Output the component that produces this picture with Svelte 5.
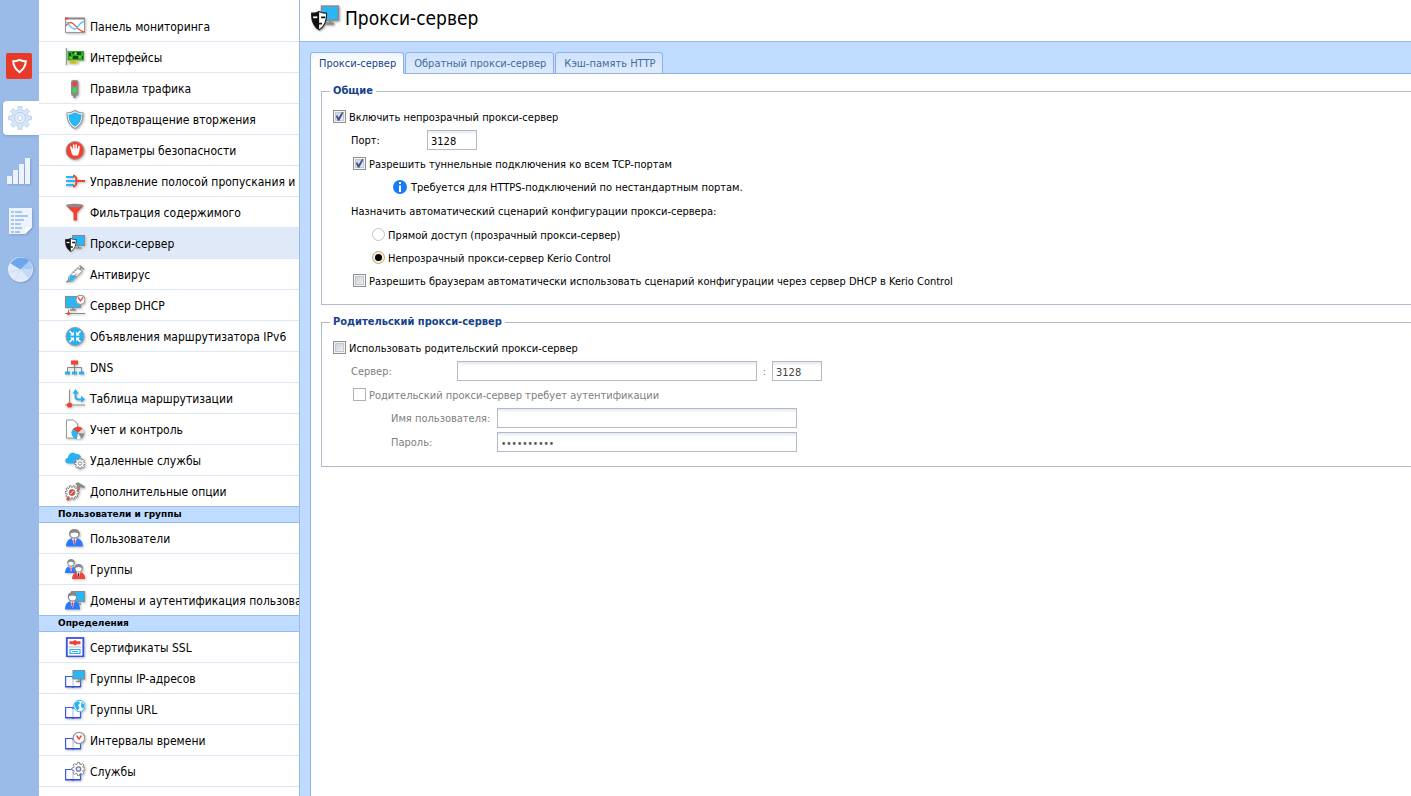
<script lang="ts">
  type Item = { icon: string; label: string };
  type Group = { title?: string; items: Item[] };

  const groups: Group[] = [
    {
      items: [
        { icon: 'dashboard', label: 'Панель мониторинга' },
        { icon: 'interfaces', label: 'Интерфейсы' },
        { icon: 'traffic', label: 'Правила трафика' },
        { icon: 'shield', label: 'Предотвращение вторжения' },
        { icon: 'hand', label: 'Параметры безопасности' },
        { icon: 'bandwidth', label: 'Управление полосой пропускания и' },
        { icon: 'filter', label: 'Фильтрация содержимого' },
        { icon: 'proxy', label: 'Прокси-сервер' },
        { icon: 'antivirus', label: 'Антивирус' },
        { icon: 'dhcp', label: 'Сервер DHCP' },
        { icon: 'router', label: 'Объявления маршрутизатора IPv6' },
        { icon: 'dns', label: 'DNS' },
        { icon: 'routing', label: 'Таблица маршрутизации' },
        { icon: 'accounting', label: 'Учет и контроль' },
        { icon: 'cloud', label: 'Удаленные службы' },
        { icon: 'advanced', label: 'Дополнительные опции' }
      ]
    },
    {
      title: 'Пользователи и группы',
      items: [
        { icon: 'user', label: 'Пользователи' },
        { icon: 'users', label: 'Группы' },
        { icon: 'domains', label: 'Домены и аутентификация пользова' }
      ]
    },
    {
      title: 'Определения',
      items: [
        { icon: 'ssl', label: 'Сертификаты SSL' },
        { icon: 'ipgroups', label: 'Группы IP-адресов' },
        { icon: 'urlgroups', label: 'Группы URL' },
        { icon: 'time', label: 'Интервалы времени' },
        { icon: 'services', label: 'Службы' }
      ]
    }
  ];

  const rail = ['kerio', 'settings', 'stats', 'logs', 'pie'];
  const tabs = ['Прокси-сервер', 'Обратный прокси-сервер', 'Кэш-память HTTP'];

  let activeItem = $state('proxy');
  let activeRail = $state('settings');
  let activeTab = $state(0);

  let proxyEnabled = $state(true);
  let port = $state('3128');
  let allowTunnel = $state(true);
  let script = $state('proxy');
  let dhcpScript = $state(false);

  let parentEnabled = $state(false);
  let parentServer = $state('');
  let parentPort = $state('3128');
  let parentAuth = $state(false);
  let userName = $state('');
  let password = $state('xxxxxxxxxx');

  function gear(cx: number, cy: number, outer: number, inner: number, teeth = 8) {
    const points: string[] = [];
    const step = (Math.PI * 2) / teeth;
    for (let i = 0; i < teeth; i++) {
      const a = i * step;
      for (const [offset, r] of [[-0.3, inner], [-0.2, outer], [0.2, outer], [0.3, inner]]) {
        const t = a + offset * step;
        points.push(`${(cx + Math.cos(t) * r).toFixed(2)} ${(cy + Math.sin(t) * r).toFixed(2)}`);
      }
    }
    return `M${points.join('L')}Z`;
  }
</script>

{#snippet monitor(x: number, y: number, w: number, h: number)}
  <rect {x} {y} width={w} height={h} fill="#29b6f6" stroke="#8a8a8a" />
  <path d="M{x + w / 2} {y + h}v2.5M{x + w / 2 - 3} {y + h + 2.5}h6" stroke="#8a8a8a" stroke-width="1.5" />
{/snippet}

{#snippet book()}
  <path d="M.6 8.5h6.4l1 1 1-1h6.5v10H9l-1 .8-1-.8H.6z" fill="#fff" stroke="#3d5af0" stroke-width="1.2" />
  <path d="M8 9.500v8" stroke="#a9b8f5" />
  <path d="M.4 18.700h15.400" stroke="#3549dd" stroke-width="1.500" />
{/snippet}

{#snippet person(x: number, y: number, coat: string)}
  <g transform="translate({x} {y})">
    <path d="M0 14c0-4 1.800-6.200 4.500-6.800h3C10.200 7.800 12 10 12 14z" fill={coat} />
    <path d="M4.200 7.300 6 13l1.800-5.700z" fill="#fff" />
    <path d="m6 8 .8 1-.8 4-.8-4z" fill={coat === '#f44336' ? '#333' : '#f44336'} />
    <circle cx="6" cy="4" r="3.300" fill="#fff" stroke="#888" />
    <path d="M2.500 4C2 1.500 3.700.2 6 .2S10 1.500 9.500 4C8.500 2.800 7.500 3.200 6 2.700 4.500 3.200 3.500 2.800 2.500 4z" fill="#888" />
  </g>
{/snippet}

{#snippet clock(cx: number, cy: number, r: number)}
  <circle {cx} {cy} {r} fill="#fff" stroke="#999" stroke-width="1.200" />
  <path d="M{cx - 2.5} {cy - 2.5} {cx} {cy + 1}l2.500-3.500" fill="none" stroke="#f44336" stroke-width="1.400" />
{/snippet}

{#snippet mask()}
  <path d="M.5 6.500c2 .2 3.700-.2 5.300-1.200 1.600 1 3.300 1.400 5.300 1.200.3 5.500-1.300 9.500-5.300 12-4-2.500-5.600-6.500-5.300-12z" fill="#fff" stroke="#222" stroke-width=".8" />
  <path d="M.5 6.500c2 .2 3.700-.2 5.300-1.200v13.200C1.800 16 .2 12 .5 6.500z" fill="#111" />
  <path d="M1.500 9.500h3" stroke="#fff" stroke-width="1.300" />
  <path d="M7.200 9.500h3M5.800 14h2" stroke="#111" stroke-width="1.300" />
{/snippet}

{#snippet icon(name: string)}
  <svg class="icon" viewBox="0 0 20 20" fill="none" aria-hidden="true">
    {#if name === 'dashboard'}
      <path d="M.5 3v13.500h19V3" fill="#fff" stroke="#999" />
      <path d="M0 2.500h20" stroke="#888" stroke-width="2" />
      <path d="M0 2.500h3" stroke="#f44336" stroke-width="2" />
      <path d="M1 10c1.500-3 4-4.500 7-2.500S13.500 15 19 16" stroke="#f44336" stroke-width="1.300" />
      <path d="M1 6c3 1 4.500 7 8.500 7C13 13 14 6 19 5.500" stroke="#4fc3f7" stroke-width="1.300" />
    {:else if name === 'interfaces'}
      <path d="M.5 2h1v16" stroke="#999" stroke-width="1.300" />
      <path d="M2.500 4h16.500v9.500H2.500z" fill="#31a829" />
      <path d="M4 13.500h9v3H4z" fill="#e5cf31" />
      <path d="M6 13.500v3M8 13.500v3M10 13.500v3" stroke="#8a961c" stroke-width=".6" />
      <path d="M4 6h2v3H4zM8 9h5v3H8zM12 5h4v3h-4zM17 9h1v3h-1zM7.500 5h2v2h-2z" fill="#104b19" />
      <path d="M10 6h1v1h-1zM5 11h2M14 10h2" stroke="#c8e84a" />
    {:else if name === 'traffic'}
      <path d="M8.300 17.500h2.500V20H8.300z" fill="#888" />
      <rect x="6" y="2" width="7.500" height="16" rx="2.500" fill="#8c8c8c" />
      <circle cx="9.700" cy="6" r="2.400" fill="#f4412f" />
      <circle cx="9.700" cy="12.500" r="2.400" fill="#31e23a" />
    {:else if name === 'shield'}
      <path d="M10 1.500c2.500 1.800 5 2.500 8 2.500.3 7-2 12.500-8 15.500C4 16.500 1.700 11 2 4c3 0 5.500-.7 8-2.500z" fill="#fff" stroke="#999" stroke-width="1.200" />
      <path d="M10 3.300c2.200 1.300 4.300 2 6.600 2.100 0 5.600-2 9.800-6.600 12.300-4.600-2.500-6.600-6.700-6.600-12.300C5.700 5.300 7.800 4.600 10 3.300z" fill="#29b6f6" />
    {:else if name === 'hand'}
      <circle cx="10" cy="10.500" r="9" fill="#f4412f" stroke="#999" />
      <path d="M6.500 9.500 5.800 7M8.700 9V5M11.200 9V5M13.500 9.500l.5-3" stroke="#fff" stroke-width="1.600" stroke-linecap="round" />
      <path d="M5.700 8.500h8.700c.2 2.700-.4 5-1.700 7H8c-1-1.500-2-3-2.300-7z" fill="#fff" />
    {:else if name === 'bandwidth'}
      <path d="M1 6h8M1 10h10M1 14h8" stroke="#29b6f6" stroke-width="2" />
      <path d="M8 4.500c3 .5 3.500 2 3.500 5.500S11 15 8 15.500M11.500 10H20" stroke="#f4412f" stroke-width="2" />
    {:else if name === 'filter'}
      <path d="M1 3.500h17.500L12 11v7.500H8.500V11z" fill="#f4412f" />
      <ellipse cx="9.700" cy="3.500" rx="8.500" ry="1.700" fill="#8b8b8b" />
    {:else if name === 'proxy'}
      {@render monitor(7.5, 2.5, 12, 10)}
      {@render mask()}
    {:else if name === 'antivirus'}
      <path d="m1.500 18.500 3-3M14.500 5.500l2.500-2.500M14.500 1.500l4.500 4" stroke="#888" stroke-width="1.500" />
      <path d="m4 12.500 9-9 4 4-9.500 9.500L3 17.500z" fill="#fff" stroke="#888" />
      <path d="m5 12 1.500-1 5.500 1-5 4.700-3.200.4z" fill="#29b6f6" />
      <path d="m8 7.500 1.500 1.500M10 5.500 11.500 7M12 4l1.500 1.500" stroke="#888" />
      <path d="m9 12.500 3-3" stroke="#f4412f" />
    {:else if name === 'dhcp'}
      {@render monitor(0.5, 1.5, 15, 11)}
      <path d="M3.500 15v3.500M0 18.500h20" stroke="#888" />
      <circle cx="3.500" cy="18.500" r="1.500" fill="#f4412f" />
      {@render clock(15.5, 4.8, 4.5)}
    {:else if name === 'router'}
      <circle cx="10" cy="10.500" r="9" fill="#29b0f2" stroke="#8f9ca5" />
      <path d="m4.500 5 4 4M15.500 5l-4 4M4.500 16l4-4M15.500 16l-4-4" stroke="#fff" stroke-width="1.600" />
      <path d="M9 5.500V9.500H5zM11 5.500V9.500h4zM9 15.500V11.500H5zM11 15.500V11.500h4z" fill="#fff" />
    {:else if name === 'dns'}
      <path d="M9.500 7v4M2.500 15v-4.500h14V15M9.500 10v5" stroke="#888" />
      <path d="M6 3.500h7v4H6z" fill="#f4412f" />
      <path d="M0 14.500h5v3H0zM7 14.500h5v3H7zM14 14.500h5v3h-5z" fill="#29b0f2" />
    {:else if name === 'routing'}
      <path d="M4.500 1.500V17H20M0 17h5" stroke="#8c8c8c" />
      <circle cx="4.500" cy="17" r="2.600" fill="#f4412f" />
      <path d="M10.500 5v3.500c0 2 1 3 3 3H17" stroke="#29b0f2" stroke-width="2" />
      <path d="M7.500 5.500 10.500 1l3 4.500zM16 7.800l4 3.500-4 3.500z" fill="#29b0f2" />
    {:else if name === 'accounting'}
      <path d="M1.500 1h7l4 4v14h-11z" fill="#fff" stroke="#999" />
      <circle cx="13" cy="14" r="6.300" fill="#8a8a8a" />
      <path d="M13 14 8 10a6.300 6.300 0 0 1 9.500-.4z" fill="#f4412f" />
      <path d="M13 14 8 10a6.300 6.300 0 0 0 4 10.200z" fill="#29b6f6" />
      <path d="m13 14 4.500-4.400a6.300 6.300 0 0 1 1.800 4.900z" fill="#ddd" />
      <path d="m13 14-1 6.200a6.300 6.300 0 0 0 4-1z" fill="#fff" />
    {:else if name === 'cloud'}
      <path d="M3.500 13.500C-.5 13.500-1 8.500 3 7.800 3 3.500 8 1 11 4.200c3-.8 5 1.300 4.800 4.200 1.700.5 1.700 5.100-1.300 5.100z" fill="#29b0f2" />
      <path d={gear(15, 13.5, 5.5, 4)} fill="#fff" stroke="#888" />
      <circle cx="15" cy="13.500" r="1.700" stroke="#888" />
    {:else if name === 'advanced'}
      <path d="m2 19 12-12" stroke="#f4412f" stroke-width="3" />
      <path d="m10 3 3-1.800 7 4.300-1 2-3-1.500-2.500 2-2-2 1-1.500z" fill="#888" />
      <path d={gear(7, 11.5, 7, 5.3, 10)} fill="#fff" stroke="#888" />
      <circle cx="7" cy="11.500" r="3" fill="#f4412f" stroke="#888" />
      <path d="m5.500 13 3-3" stroke="#fff" />
    {:else if name === 'user'}
      <g transform="translate(1 1) scale(1.400 1.250)">
        {@render person(0, 0, '#2979ff')}
      </g>
    {:else if name === 'users'}
      {@render person(0, 0, '#2979ff')}
      <g transform="translate(7 5) scale(1.100)">
        {@render person(0, 0, '#f44336')}
      </g>
    {:else if name === 'domains'}
      {@render monitor(6.5, 1.5, 13, 10)}
      <g transform="translate(0 2) scale(1.250)">
        {@render person(0, 0, '#2979ff')}
      </g>
    {:else if name === 'ssl'}
      <rect x="1.800" y="1" width="16.500" height="18.500" fill="#fff" stroke="#3652e8" stroke-width="1.800" />
      <path d="m10 3 2 1.300h3.500v3H12l-2 1.300-2-1.300H4.500v-3H8z" fill="#f4412f" />
      <path d="M3.500 10h13" stroke="#bbb" />
      <path d="M5 12.500h10v4H5zM7 14.500h6" stroke="#29b0f2" stroke-width="1.200" />
    {:else if name === 'ipgroups'}
      {@render book()}
      {@render monitor(8, 2.5, 11.5, 8.5)}
    {:else if name === 'urlgroups'}
      {@render book()}
      <circle cx="14.500" cy="7" r="5.700" fill="#fff" stroke="#38b6ee" />
      <path d="M9.500 4.500 13.500 2l1.500 2-2 2.500 1.500 2-2 3.300-2-3zM16.500 3l3 3-.5 3-2 .5-1-3z" fill="#29b0f2" />
    {:else if name === 'time'}
      {@render book()}
      {@render clock(14, 8, 5.7)}
    {:else if name === 'services'}
      {@render book()}
      <path d={gear(13.5, 8, 6.7, 5)} fill="#fff" stroke="#8a8a8a" />
      <circle cx="13.500" cy="8" r="2.200" fill="#eef" stroke="#6f7aa5" stroke-width="1.300" />
    {/if}
  </svg>
{/snippet}

{#snippet railIcon(name: string)}
  {#if name === 'kerio'}
    <svg width="26" height="26" viewBox="0 0 26 26" fill="none" aria-hidden="true">
      <rect width="26" height="26" rx="2" fill="#e83a28" />
      <path d="M13.500 6.800c2 1 4 1.500 6.300 1.500-.2 4.500-2.300 8-6.300 11-4-3-6.100-6.500-6.300-11 2.300 0 4.300-.5 6.300-1.500z" stroke="#fff" stroke-width="2" />
    </svg>
  {:else if name === 'settings'}
    <svg width="26" height="26" viewBox="0 0 26 26" aria-hidden="true">
      <path d={gear(13, 13, 11.5, 8.3)} fill="#dbe7f8" stroke="#b9d0f0" />
      <circle cx="13" cy="13" r="5.500" fill="#e6effb" stroke="#b3cdf0" />
      <circle cx="13" cy="13" r="2.500" fill="#fff" stroke="#b3cdf0" />
    </svg>
  {:else if name === 'stats'}
    <svg width="26" height="28" viewBox="0 0 26 28" fill="#edf3fc" aria-hidden="true">
      <path d="M1 19h5v8H1zM7 13h5v14H7zM13 7h5v20h-5zM19 1h5v26h-5z" />
    </svg>
  {:else if name === 'logs'}
    <svg width="26" height="28" viewBox="0 0 26 28" aria-hidden="true">
      <path d="M3 1h23v19l-7 7H3z" fill="#edf3fc" />
      <path d="M19 27v-7h7z" fill="#fff" />
      <path
        d="M5 5h3m1 0h7M5 9h3m1 0h13M5 13h3m1 0h9M5 17h3m1 0h6M5 21h3m1 0h7M5 25h3m1 0h5"
        stroke="#a9c6ee"
        stroke-width="2"
      />
    </svg>
  {:else}
    <svg width="28" height="26" viewBox="0 0 28 26" aria-hidden="true">
      <circle cx="14.500" cy="12.500" r="12" fill="#dfeafa" stroke="#eff5fd" />
      <path d="M14.500 12.500 4.500 6.500a12 12 0 0 1 19-2.500z" fill="#6fa5ea" />
      <path d="m14.500 12.500 9-8.500a12 12 0 0 1 3 8.500z" fill="#a9caf4" />
      <path d="M14.500 12.500h12a12 12 0 0 1-4.500 9z" fill="#c3daf6" />
      <path d="M14.500 12.500 3 15M14.500 12.500 9 23" stroke="#c9dcf5" />
    </svg>
  {/if}
{/snippet}

<div class="app">
  <nav class="rail" aria-label="Разделы">
    {#each rail as name}
      <button
        type="button"
        class="rail-btn {name}"
        class:active={activeRail === name}
        aria-label={name}
        onclick={() => (activeRail = name)}
      >
        {@render railIcon(name)}
      </button>
    {/each}
  </nav>

  <nav class="menu" aria-label="Конфигурация">
    {#each groups as group}
      {#if group.title}
        <h2>{group.title}</h2>
      {/if}
      <ul>
        {#each group.items as item}
          <li>
            <a
              href="#{item.icon}"
              class:active={activeItem === item.icon}
              onclick={() => (activeItem = item.icon)}
            >
              {@render icon(item.icon)}
              <span>{item.label}</span>
            </a>
          </li>
        {/each}
      </ul>
    {/each}
  </nav>

  <main>
    <header>
      <svg class="title-icon" viewBox="0 0 20 20" aria-hidden="true">
        {@render monitor(7.5, 1.5, 12, 10)}
        {@render mask()}
      </svg>
      <h1>Прокси-сервер</h1>
    </header>

    <div class="body">
      <div class="tabs" role="tablist">
        {#each tabs as tab, i}
          <button
            type="button"
            role="tab"
            class:active={activeTab === i}
            aria-selected={activeTab === i}
            onclick={() => (activeTab = i)}>{tab}</button
          >
        {/each}
      </div>

      <div class="panel" role="tabpanel">
        <fieldset>
          <legend>Общие</legend>
          <div class="row">
            <input type="checkbox" id="proxy-enabled" bind:checked={proxyEnabled} />
            <label for="proxy-enabled">Включить непрозрачный прокси-сервер</label>
          </div>
          <div class="row tall indent">
            <label class="field-label short" for="port">Порт:</label>
            <input type="text" id="port" class="port" bind:value={port} />
          </div>
          <div class="row nested">
            <input type="checkbox" id="allow-tunnel" bind:checked={allowTunnel} />
            <label for="allow-tunnel">Разрешить туннельные подключения ко всем TCP-портам</label>
          </div>
          <div class="row tall note">
            <svg width="14" height="14" viewBox="0 0 14 14" aria-hidden="true">
              <circle cx="7" cy="7" r="7" fill="#1a7cf5" />
              <path d="M6 2h2v2H6zM6 5.500h2V12H6z" fill="#fff" />
            </svg>
            <span>Требуется для HTTPS-подключений по нестандартным портам.</span>
          </div>
          <div class="row tall indent">
            <span id="script-label">Назначить автоматический сценарий конфигурации прокси-сервера:</span>
          </div>
          <div role="radiogroup" aria-labelledby="script-label">
            <div class="row choice">
              <input type="radio" id="script-direct" value="direct" bind:group={script} />
              <label for="script-direct">Прямой доступ (прозрачный прокси-сервер)</label>
            </div>
            <div class="row choice">
              <input type="radio" id="script-proxy" value="proxy" bind:group={script} />
              <label for="script-proxy">Непрозрачный прокси-сервер Kerio Control</label>
            </div>
          </div>
          <div class="row nested">
            <input type="checkbox" id="dhcp-script" bind:checked={dhcpScript} />
            <label for="dhcp-script"
              >Разрешить браузерам автоматически использовать сценарий конфигурации через сервер DHCP в Kerio
              Control</label
            >
          </div>
        </fieldset>

        <fieldset>
          <legend>Родительский прокси-сервер</legend>
          <div class="row">
            <input type="checkbox" id="parent-enabled" bind:checked={parentEnabled} />
            <label for="parent-enabled">Использовать родительский прокси-сервер</label>
          </div>
          <div class="row tall indent" class:off={!parentEnabled}>
            <label class="field-label" for="parent-server">Сервер:</label>
            <input type="text" id="parent-server" class="wide" disabled={!parentEnabled} bind:value={parentServer} />
            <label class="colon" for="parent-port">:</label>
            <input type="text" id="parent-port" class="port" disabled={!parentEnabled} bind:value={parentPort} />
          </div>
          <div class="row nested" class:off={!parentEnabled}>
            <input type="checkbox" id="parent-auth" disabled={!parentEnabled} bind:checked={parentAuth} />
            <label for="parent-auth">Родительский прокси-сервер требует аутентификации</label>
          </div>
          <div class="row tall deep" class:off={!parentAuth}>
            <label class="field-label" for="user-name">Имя пользователя:</label>
            <input type="text" id="user-name" class="wide" disabled={!parentAuth} bind:value={userName} />
          </div>
          <div class="row tall deep" class:off={!parentAuth}>
            <label class="field-label" for="password">Пароль:</label>
            <input type="password" id="password" class="wide" disabled={!parentAuth} bind:value={password} />
          </div>
        </fieldset>
      </div>
    </div>
  </main>
</div>

<style>
  .app {
    display: grid;
    grid-template-columns: 39px 261px minmax(0, 1fr);
    height: 100vh;
    overflow: hidden;
    background: #fff;
    color: #000;
    font: 11px/14px 'DejaVu Sans Condensed', 'DejaVu Sans', sans-serif;
  }

  button,
  input {
    font: inherit;
    margin: 0;
    box-sizing: border-box;
  }

  /* Left rail */
  .rail {
    display: flex;
    flex-direction: column;
    align-items: stretch;
    gap: 22px;
    padding-top: 53px;
    background: #9abbe8;
  }

  .rail-btn {
    display: flex;
    align-items: center;
    padding: 0 0 0 6px;
    border: 0;
    background: none;
    cursor: pointer;
  }

  .rail-btn.active {
    height: 34px;
    margin-left: 3px;
    padding-left: 4px;
    background: #fff;
    border-radius: 4px 0 0 4px;
    box-shadow: 0 1px 3px #7f9fcc;
  }

  .rail-btn:not(.active):not(.kerio) svg {
    filter: drop-shadow(1px 1px 1px #7f9fcc);
  }

  /* Menu */
  .menu {
    padding-top: 11px;
    overflow: hidden;
    background: #fff;
    border-right: 1px solid #99bbe8;
  }

  .menu ul {
    margin: 0;
    padding: 0;
    list-style: none;
  }

  .menu a {
    display: flex;
    align-items: center;
    gap: 5px;
    height: 30px;
    padding-left: 26px;
    border-bottom: 1px solid #dbe6f6;
    color: #000;
    font-size: 12px;
    text-decoration: none;
    white-space: nowrap;
  }

  .menu a.active {
    background: #dfe9f8;
  }

  .menu ul:not(:last-child) li:last-child a {
    border-bottom: 0;
  }

  .menu a span,
  .row label,
  .row span {
    padding-top: 2px;
  }

  .menu h2 {
    margin: 0;
    padding-left: 19px;
    border: solid #99bbe8;
    border-width: 1px 0;
    background: #bfdbff;
    font: bold 9px/15px 'DejaVu Sans', sans-serif;
  }

  .icon {
    flex: none;
    width: 20px;
    height: 20px;
    filter: drop-shadow(1px 1px 1px #bbb);
  }

  /* Page */
  main {
    display: flex;
    flex-direction: column;
    min-width: 0;
  }

  header {
    display: flex;
    align-items: center;
    gap: 6px;
    height: 36px;
    padding: 0 11px 5px;
    border-bottom: 1px solid #99bbe8;
  }

  .title-icon {
    width: 28px;
    height: 28px;
    filter: drop-shadow(1px 1px 1px #999);
  }

  h1 {
    margin: 0;
    font-size: 19px;
    font-weight: normal;
    line-height: 24px;
  }

  .body {
    flex: 1;
    display: flex;
    flex-direction: column;
    padding: 10px 0 0 10px;
    background: #bfdbff;
  }

  .tabs {
    display: flex;
    gap: 1px;
  }

  .tabs button {
    height: 22px;
    padding: 1px 7px 0 8px;
    border: 1px solid #8db2e3;
    border-radius: 3px 3px 0 0;
    background: linear-gradient(#cfe2fd, #dfebfc);
    color: #416da3;
    cursor: pointer;
  }

  .tabs button.active {
    position: relative;
    border-bottom-color: #fff;
    background: linear-gradient(#eef5fe, #fff 50%);
    color: #15428b;
  }

  .panel {
    flex: 1;
    margin-top: -1px;
    padding: 10px 0 0 10px;
    border: solid #8db2e3;
    border-width: 1px 0 0 1px;
    background: #fff;
  }

  fieldset {
    min-width: 0;
    margin: 0 0 10px;
    padding: 7px 0 12px 11px;
    border: 1px solid #b5b8c8;
    border-right: 0;
  }

  legend {
    margin-left: -3px;
    padding: 0 3px;
    color: #15428b;
    font-weight: bold;
  }

  .row {
    display: flex;
    align-items: center;
    height: 23px;
    gap: 3px;
    white-space: nowrap;
  }

  .row.tall {
    height: 24px;
  }

  .row.indent {
    padding-left: 18px;
    gap: 0;
  }

  .row.nested {
    padding-left: 20px;
  }

  .row.choice {
    padding-left: 39px;
  }

  .row.deep {
    padding-left: 58px;
    gap: 0;
  }

  .row.note {
    padding-left: 60px;
    gap: 4px;
  }

  .row.off {
    color: #808080;
  }

  .field-label {
    width: 106px;
  }

  .field-label.short {
    width: 76px;
  }

  .row .colon {
    width: 15px;
    text-align: center;
  }

  input[type='text'],
  input[type='password'] {
    height: 20px;
    padding: 2px 3px 0;
    border: 1px solid #b5b8c8;
    background: linear-gradient(#e4e9ee, #fff 4px);
    color: #000;
  }

  input[type='text']:disabled {
    color: #444;
  }

  input[type='password'] {
    color: #555;
    font-size: 10px;
  }

  .wide {
    width: 300px;
  }

  .port {
    width: 50px;
  }

  input[type='checkbox'] {
    appearance: none;
    display: grid;
    place-items: center;
    width: 13px;
    height: 13px;
    border: 1px solid #8e8f8f;
    background: linear-gradient(135deg, #c8ccd2, #f4f4f4);
    box-shadow: inset 0 0 0 1px #f4f4f4, inset 0 0 0 2px #c4c8cd;
  }

  input[type='checkbox']:checked::after {
    content: '';
    width: 9px;
    height: 9px;
    background: #3c5796;
    clip-path: polygon(8% 44%, 24% 36%, 40% 62%, 76% 2%, 96% 2%, 48% 98%, 32% 98%);
  }

  input[type='checkbox']:disabled {
    border-color: #b1b1b1;
    background: #fff;
    box-shadow: none;
  }

  input[type='radio'] {
    appearance: none;
    display: grid;
    place-items: center;
    width: 13px;
    height: 13px;
    border: 1px solid #c3c3c3;
    border-radius: 50%;
    background: #fff;
  }

  input[type='radio']:checked {
    border-color: #b9a988;
    background: #fbeecb;
  }

  input[type='radio']:checked::after {
    content: '';
    width: 7px;
    height: 7px;
    border-radius: 50%;
    background: #000;
  }
</style>
